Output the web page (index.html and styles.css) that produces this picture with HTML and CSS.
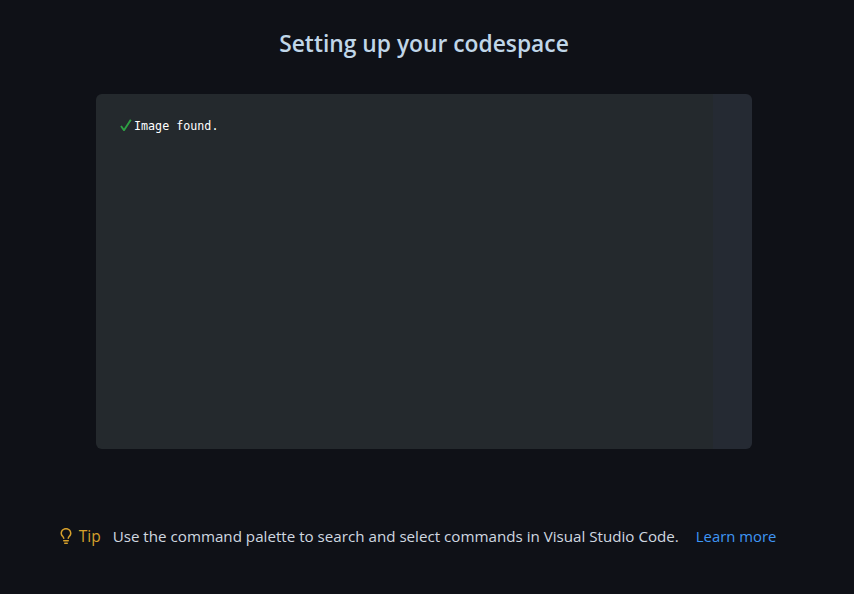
FILE: index.html
```html
<!DOCTYPE html>
<html lang="en">
<head>
<meta charset="utf-8">
<title>Setting up your codespace</title>
<link rel="stylesheet" href="styles.css">
</head>
<body>
<main class="page">
  <h1 class="title">Setting up your codespace</h1>
  <section class="log">
    <div class="log-line">
      <svg class="check" viewBox="0 0 12 12" width="12" height="12" aria-hidden="true"><path d="M1 7 L4 11.2 L10.8 .8" fill="none" stroke="#2ea043" stroke-width="1.9"/></svg>
      <span>Image found.</span>
    </div>
  </section>
  <footer class="tip">
    <svg class="bulb" viewBox="0 0 16 16" width="16" height="16" aria-hidden="true"><path fill="#d6a02b" fill-rule="evenodd" d="M8 1.5c-2.363 0-4 1.69-4 3.75 0 .984.424 1.625.984 2.304l.214.253c.223.264.47.556.673.848.284.411.537.896.621 1.49a.75.75 0 0 1-1.484.211c-.04-.282-.163-.547-.37-.847a8.456 8.456 0 0 0-.542-.68c-.084-.1-.173-.205-.268-.32C3.201 7.75 2.5 6.766 2.5 5.25 2.5 2.31 4.863 0 8 0s5.5 2.31 5.5 5.25c0 1.516-.701 2.5-1.328 3.259-.095.115-.184.22-.268.319-.207.245-.383.453-.541.681-.208.3-.33.565-.37.847a.751.751 0 0 1-1.485-.212c.084-.593.337-1.078.621-1.489.203-.292.45-.584.673-.848.075-.088.147-.173.213-.253.561-.679.985-1.32.985-2.304 0-2.06-1.637-3.75-4-3.75ZM5.75 12h4.5a.75.75 0 0 1 0 1.5h-4.5a.75.75 0 0 1 0-1.5ZM6 15.25a.75.75 0 0 1 .75-.75h2.5a.75.75 0 0 1 0 1.5h-2.5a.75.75 0 0 1-.75-.75Z"/></svg>
    <span class="tip-label">Tip</span>
    <span class="tip-text">Use the command palette to search and select commands in Visual Studio Code.</span>
    <a class="tip-link" href="#">Learn more</a>
  </footer>
</main>
</body>
</html>
```
FILE: styles.css
```css
* { box-sizing: border-box; }
html, body { margin: 0; height: 100%; }
body {
  background: #0f1117;
  font-family: "Open Sans", "Noto Sans", sans-serif;
  color: #c9d1d9;
}
.page {
  height: 594px;
  display: flex;
  flex-direction: column;
  align-items: center;
  overflow: hidden;
  padding-right: 6px;
}
.title {
  margin: 28px 0 0;
  height: 32px;
  font-size: 22.8px;
  line-height: 32px;
  font-weight: 600;
  color: #c0d6e8;
  letter-spacing: 0;
}
.log {
  width: 656px;
  height: 355px;
  margin: 34px 0 0;
  padding: 22px 24px;
  border-radius: 6px;
  background: linear-gradient(90deg, #24292d 94%, #252a33 94%);
}
.log-line {
  display: flex;
  align-items: center;
  gap: 2px;
  font-family: "DejaVu Sans Mono", "Liberation Mono", monospace;
  font-size: 11.7px;
  line-height: 18px;
  color: #ffffff;
}
.log-line span { position: relative; top: 1px; }
.check { flex: none; }
.tip {
  margin: 76px 14px 0 0;
  display: flex;
  align-items: center;
  font-size: 15px;
  line-height: 22px;
  white-space: nowrap;
}
.bulb { flex: none; margin-right: 5px; }
.tip-label { color: #d6a02b; margin-right: 12px; font-size: 15.5px; }
.tip-text { color: #d0d8e0; margin-right: 17px; font-size: 15.16px; }
.tip-link { color: #3f96f5; text-decoration: none; font-size: 14.85px; }
```
